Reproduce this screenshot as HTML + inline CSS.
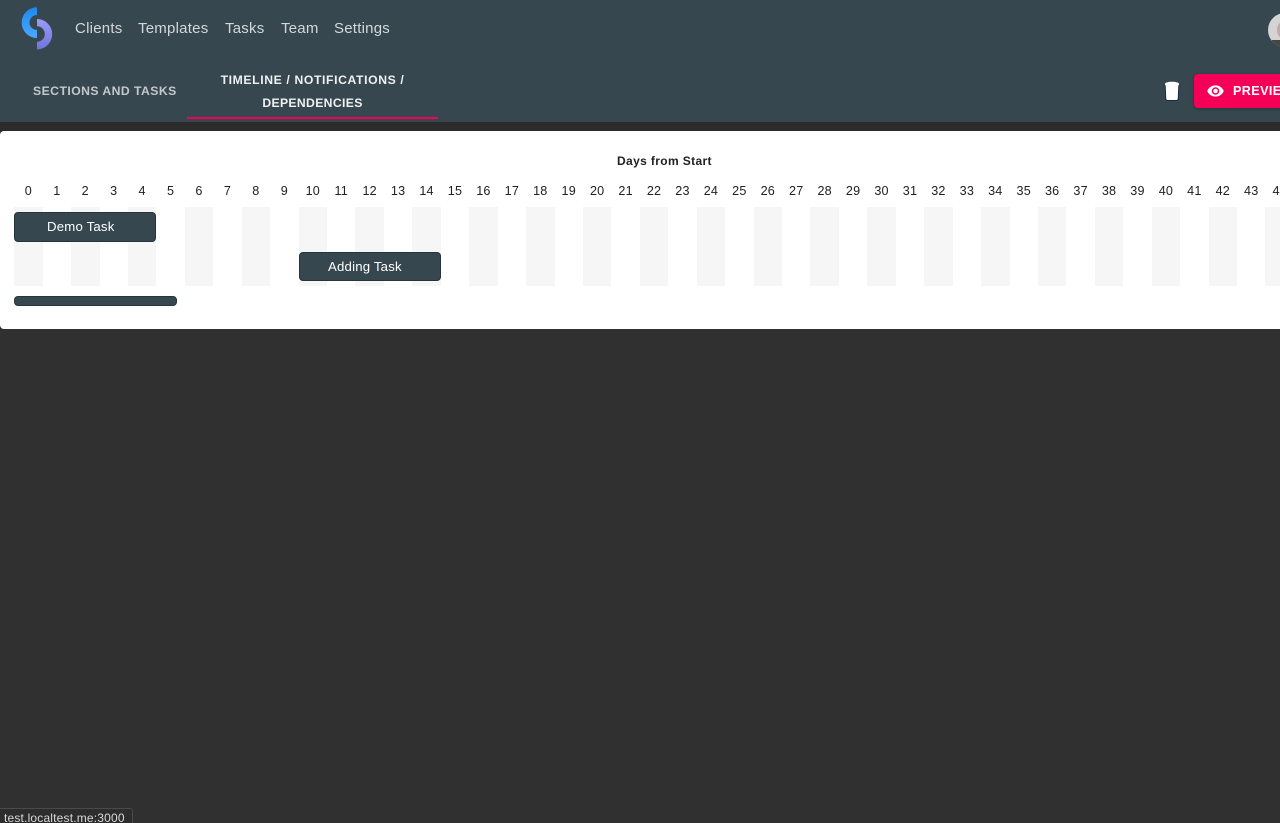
<!DOCTYPE html>
<html><head><meta charset="utf-8"><style>
html,body{margin:0;padding:0;background:#303030;width:1280px;height:823px;overflow:hidden;font-family:"Liberation Sans",sans-serif}
#wrap{position:absolute;left:0;top:0;width:1280px;height:823px;overflow:hidden;background:#303030}
.a{position:absolute;white-space:nowrap}
#hdr{position:absolute;left:0;top:0;width:1280px;height:122px;background:#37474f}
#band{position:absolute;left:0;top:122px;width:1280px;height:9px;background:#2b2b2b}
.nav{top:20px;font-size:15px;line-height:18px;color:#d3d8da;letter-spacing:.23px}
.tab{font-size:12.2px;font-weight:bold;line-height:23px;letter-spacing:.35px;text-align:center}
#card{position:absolute;left:0;top:131px;width:1300px;height:198px;background:#fff;border-radius:4px}
.row{position:absolute;left:14.2px;display:flex}
.row span{display:block;flex:0 0 28.44px;width:28.44px;text-align:center}
#nums{top:183px;font-size:12.6px;line-height:16px;color:#212121;letter-spacing:.2px}
#st{top:207px;height:79px}
#st span{height:79px}
#st span:nth-child(odd){background:#f6f6f6}
.task{position:absolute;box-sizing:border-box;background:#37474f;border:1px solid #26343b;border-radius:4px;color:#fff;font-size:13.2px;line-height:28px;width:142px;height:30px;letter-spacing:.2px}
</style></head><body><div id="wrap">
<div id="hdr"></div><div id="band"></div>
<svg class="a" style="left:15px;top:0" width="45" height="56" viewBox="15 0 45 56">
<defs><linearGradient id="b" x1="0" y1="0" x2="0" y2="1"><stop offset="0" stop-color="#1e88f0"/><stop offset="1" stop-color="#4aa8ff"/></linearGradient>
<linearGradient id="p" x1="0" y1="0" x2="0" y2="1"><stop offset="0" stop-color="#9a9cf5"/><stop offset="1" stop-color="#6f74e0"/></linearGradient></defs>
<path d="M37 7.300A15.350 15.350 0 0 0 37 38V30A7.500 7.500 0 0 1 37 15Z" fill="url(#b)"/>
<path d="M37 19A15.200 15.200 0 0 1 37 49.400V41.800A7.800 7.800 0 0 0 37 26.200Z" fill="url(#p)"/>
</svg>
<div class="a nav" style="left:75px">Clients</div>
<div class="a nav" style="left:138px">Templates</div>
<div class="a nav" style="left:225px">Tasks</div>
<div class="a nav" style="left:281px">Team</div>
<div class="a nav" style="left:334px">Settings</div>
<div class="a" style="left:1268px;top:13px;width:34px;height:34px;border-radius:50%;background:#d4d4d4;overflow:hidden"><div style="position:absolute;left:9px;top:8px;width:14px;height:18px;border-radius:50%;background:#c4aaa4"></div><div style="position:absolute;left:4px;top:27px;width:24px;height:10px;background:#4a4540"></div></div>
<div class="a tab" style="left:33px;top:80px;color:#c3c8cb;letter-spacing:.46px">SECTIONS AND TASKS</div>
<div class="a tab" style="left:187px;top:68.500px;width:251px;color:#eef0f1"><span style="letter-spacing:.62px">TIMELINE / NOTIFICATIONS /</span><br>DEPENDENCIES</div>
<div class="a" style="left:187px;top:117px;width:251px;height:2px;background:#f50057"></div>
<svg class="a" style="left:1163px;top:80px" width="18" height="22" viewBox="0 0 18 22">
<path d="M2.200 4.500H15.800L15.200 18.800A1.700 1.700 0 0 1 13.500 20.400H4.500A1.700 1.700 0 0 1 2.800 18.800Z" fill="#fff" stroke="#1a2540" stroke-width=".9"/>
<path d="M2 4C2 2.600 5 1.800 9 1.800S16 2.600 16 4V5.200H2Z" fill="#fff"/>
</svg>
<div class="a" style="left:1194px;top:74px;width:100px;height:34px;background:#f50057;border-radius:4px;box-shadow:0 1px 3px rgba(0,0,0,.3)"></div>
<svg class="a" style="left:1206px;top:82px" width="19" height="18" viewBox="0 0 24 24"><path fill="#fff" d="M12 4.500C7 4.500 2.700 7.600 1 12c1.700 4.400 6 7.500 11 7.500s9.300-3.100 11-7.500c-1.700-4.400-6-7.500-11-7.500zM12 17a5 5 0 1 1 0-10 5 5 0 0 1 0 10zm0-8a3 3 0 1 0 0 6 3 3 0 0 0 0-6z"/></svg>
<div class="a" style="left:1233px;top:82px;font-size:12.6px;line-height:18px;font-weight:bold;color:#fff;letter-spacing:.4px">PREVIEW</div>
<div id="card"></div>
<div class="a" style="left:617px;top:153px;font-size:12px;line-height:16px;font-weight:bold;color:#212121;letter-spacing:.37px">Days from Start</div>
<div id="nums" class="row"><span>0</span><span>1</span><span>2</span><span>3</span><span>4</span><span>5</span><span>6</span><span>7</span><span>8</span><span>9</span><span>10</span><span>11</span><span>12</span><span>13</span><span>14</span><span>15</span><span>16</span><span>17</span><span>18</span><span>19</span><span>20</span><span>21</span><span>22</span><span>23</span><span>24</span><span>25</span><span>26</span><span>27</span><span>28</span><span>29</span><span>30</span><span>31</span><span>32</span><span>33</span><span>34</span><span>35</span><span>36</span><span>37</span><span>38</span><span>39</span><span>40</span><span>41</span><span>42</span><span>43</span><span>44</span></div>
<div id="st" class="row"><span></span><span></span><span></span><span></span><span></span><span></span><span></span><span></span><span></span><span></span><span></span><span></span><span></span><span></span><span></span><span></span><span></span><span></span><span></span><span></span><span></span><span></span><span></span><span></span><span></span><span></span><span></span><span></span><span></span><span></span><span></span><span></span><span></span><span></span><span></span><span></span><span></span><span></span><span></span><span></span><span></span><span></span><span></span><span></span><span></span></div>
<div class="task" style="left:14px;top:212px;padding-left:32px">Demo Task</div>
<div class="task" style="left:299px;top:252px;padding-left:28px;line-height:27px;height:29px">Adding Task</div>
<div class="a" style="left:14px;top:296px;width:163px;height:10px;box-sizing:border-box;background:#37474f;border:1px solid #26343b;border-radius:4px"></div>
<div class="a" style="left:-4px;top:808px;width:137px;height:20px;box-sizing:border-box;background:#2d2d2d;border:1px solid #4a4a4a;border-radius:3px;color:#d8d8d8;font-size:12px;line-height:18px;padding-left:7px;letter-spacing:.18px">test.localtest.me:3000</div>
</div></body></html>
